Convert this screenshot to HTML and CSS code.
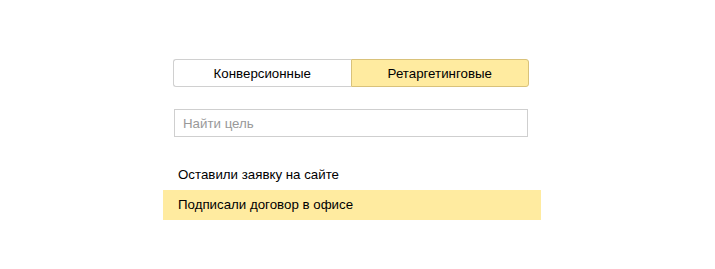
FILE: index.html
```html
<!DOCTYPE html>
<html>
<head>
<meta charset="utf-8">
<link rel="stylesheet" href="styles.css">
</head>
<body>
<div class="panel">
  <div class="tabs">
    <div class="tab">Конверсионные</div>
    <div class="tab tab-active">Ретаргетинговые</div>
  </div>
  <div class="search">
    <input class="search-input" type="text" placeholder="Найти цель">
  </div>
  <ul class="goals">
    <li class="goal">Оставили заявку на сайте</li>
    <li class="goal goal-selected">Подписали договор в офисе</li>
  </ul>
</div>
</body>
</html>
```

FILE: styles.css
```css
html, body {
  margin: 0;
  padding: 0;
  background: #fff;
}
body {
  font-family: "Liberation Sans", Arial, sans-serif;
  font-size: 13.3px;
  color: #000;
}
.panel {
  width: 378px;
  margin-left: 163px;
  padding-top: 59px;
}
.tabs {
  display: flex;
  margin: 0 12px 0 10px;
  height: 28px;
}
.tab {
  flex: 1;
  display: flex;
  align-items: center;
  justify-content: center;
  border: 1px solid #d0d0d0;
  box-sizing: border-box;
  background: #fff;
}
.tab:first-child {
  border-radius: 3px 0 0 3px;
  border-right: none;
}
.tab-active {
  background: #ffeba0;
  border-color: #d9c27a;
  border-radius: 0 3px 3px 0;
}
.search {
  margin: 22px 13px 0 11px;
}
.search-input {
  display: block;
  width: 100%;
  height: 28px;
  box-sizing: border-box;
  border: 1px solid #cfcfcf;
  border-radius: 0;
  padding: 0 8px;
  font-family: inherit;
  font-size: 13.3px;
  color: #000;
  outline: none;
}
.search-input::placeholder {
  color: #999;
}
.goals {
  list-style: none;
  margin: 23px 0 0;
  padding: 0;
}
.goal {
  height: 30px;
  line-height: 30px;
  padding-left: 15px;
}
.goal-selected {
  background: #ffeba0;
}
```
